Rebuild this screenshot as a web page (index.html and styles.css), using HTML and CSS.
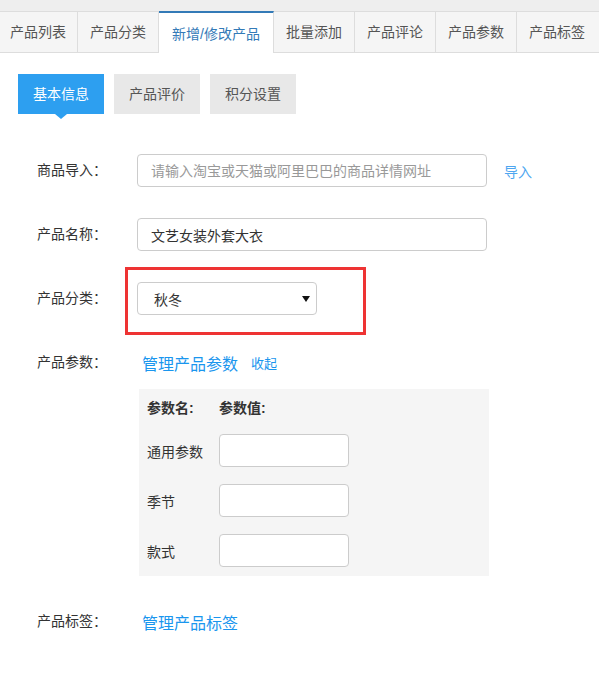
FILE: index.html
```html
<!DOCTYPE html>
<html lang="zh-CN">
<head>
    <meta charset="UTF-8" />
    <title>新增/修改产品</title>
    <link rel="stylesheet" href="styles.css">
</head>
<body>
    <div class="top-strip"></div>

    <!-- 主导航 -->
    <ul class="nav-tabs">
        <li class="first">产品列表</li>
        <li>产品分类</li>
        <li class="active">新增/修改产品</li>
        <li>批量添加</li>
        <li>产品评论</li>
        <li>产品参数</li>
        <li class="last">产品标签</li>
    </ul>

    <div class="content">
        <!-- 子导航 -->
        <div class="sub-tabs">
            <span class="sub-tab on">基本信息</span>
            <span class="sub-tab">产品评价</span>
            <span class="sub-tab">积分设置</span>
        </div>

        <form class="goods-form">
            <div class="form-row">
                <label class="form-label">商品导入：</label>
                <input type="text" class="form-input" placeholder="请输入淘宝或天猫或阿里巴巴的商品详情网址" />
                <a class="link-import">导入</a>
            </div>
            <div class="form-row">
                <label class="form-label">产品名称：</label>
                <input type="text" class="form-input" value="文艺女装外套大衣" />
            </div>
            <div class="form-row">
                <label class="form-label">产品分类：</label>
                <div class="select-wrap">
                    <div class="select-box">
                        <span>秋冬</span>
                        <i class="caret"></i>
                    </div>
                </div>
            </div>
            <div class="form-row top">
                <label class="form-label">产品参数：</label>
                <div class="param-col">
                    <div class="link-line">
                        <a class="link-big">管理产品参数</a>
                        <a class="link-small">收起</a>
                    </div>
                    <div class="param-box">
                        <div class="param-head">
                            <span class="param-name">参数名:</span>
                            <span>参数值:</span>
                        </div>
                        <div class="param-row">
                            <span class="param-name">通用参数</span>
                            <input type="text" class="param-input" />
                        </div>
                        <div class="param-row">
                            <span class="param-name">季节</span>
                            <input type="text" class="param-input" />
                        </div>
                        <div class="param-row">
                            <span class="param-name">款式</span>
                            <input type="text" class="param-input" />
                        </div>
                    </div>
                </div>
            </div>
            <div class="form-row">
                <label class="form-label">产品标签：</label>
                <div class="link-line">
                    <a class="link-big">管理产品标签</a>
                </div>
            </div>
        </form>
    </div>
</body>
</html>
```

FILE: styles.css
```css
* {
    box-sizing:border-box;
}
body {
    margin:0;
    font-family:"Liberation Sans", "Noto Sans CJK SC", sans-serif;
    font-size:14px;
    color:#333;
    background:#fff;
}
.top-strip {
    height:11px;
    background:#eee;
}
.nav-tabs {
    display:flex;
    margin:0;
    padding:0;
    list-style:none;
    background:#f5f5f5;
    border-top:1px solid #ddd;
    border-bottom:1px solid #ddd;
}
.nav-tabs li {
    height:40px;
    line-height:40px;
    padding:0 12px;
    color:#555;
    border-right:1px solid #ddd;
    white-space:nowrap;
}
.nav-tabs li.first {
    padding:0 11px 0 10px;
}
.nav-tabs li.last {
    flex:1;
    border-right:none;
}
.nav-tabs li.active {
    margin:-1px 0 -1px;
    height:42px;
    line-height:42px;
    padding:0 13px;
    background:#fff;
    color:#337ab7;
    border-top:2px solid #337ab7;
}
.content {
    padding:21px 18px 0;
}
.sub-tabs {
    display:flex;
    gap:10px;
}
.sub-tab {
    position:relative;
    width:86px;
    height:40px;
    line-height:40px;
    text-align:center;
    background:#e8e8e8;
    color:#555;
}
.sub-tab.on {
    background:#2d9ff0;
    color:#fff;
}
.sub-tab.on:after {
    content:'';
    position:absolute;
    left:50%;
    bottom:-5px;
    margin-left:-6px;
    border-left:6px solid transparent;
    border-right:6px solid transparent;
    border-top:5px solid #2d9ff0;
}
.goods-form {
    margin-top:40px;
}
.form-row {
    display:flex;
    align-items:center;
    min-height:33px;
    margin-bottom:31px;
}
.form-row.top {
    align-items:flex-start;
    margin-bottom:29px;
}
.form-label {
    width:119px;
    padding-left:19px;
    line-height:33px;
    color:#333;
}
.form-input {
    width:350px;
    height:33px;
    padding:0 13px;
    border:1px solid #ccc;
    border-radius:4px;
    font-family:inherit;
    font-size:14px;
    color:#333;
    outline:none;
}
.form-input::placeholder {
    color:#999;
}
.link-import {
    margin-left:17px;
    color:#4ea6f0;
}
.select-wrap {
    position:relative;
}
.select-wrap:before {
    content:'';
    position:absolute;
    top:-15px;
    left:-12px;
    right:-49px;
    bottom:-20px;
    border:3px solid #ee3333;
}
.select-box {
    display:flex;
    align-items:center;
    justify-content:space-between;
    width:180px;
    height:33px;
    padding:0 6px 0 16px;
    border:1px solid #ccc;
    border-radius:4px;
    color:#333;
}
.caret {
    width:0;
    height:0;
    margin-top:1px;
    border-left:4px solid transparent;
    border-right:4px solid transparent;
    border-top:6px solid #111;
}
.param-col {
    display:flex;
    flex-direction:column;
}
.link-line {
    height:33px;
    display:flex;
    align-items:center;
    padding-left:5px;
}
.link-big {
    font-size:16px;
    color:#1a96ee;
}
.link-small {
    margin-left:13px;
    font-size:13px;
    color:#1a96ee;
}
.param-box {
    width:350px;
    margin:10px 0 0 2px;
    padding:9px 8px;
    background:#f5f5f5;
}
.param-head {
    display:flex;
    height:20px;
    line-height:20px;
    margin-bottom:16px;
    font-weight:bold;
}
.param-row {
    display:flex;
    align-items:center;
    margin-bottom:17px;
}
.param-row:last-child {
    margin-bottom:0;
}
.param-name {
    width:72px;
}
.param-input {
    width:130px;
    height:33px;
    border:1px solid #ccc;
    border-radius:4px;
    background:#fff;
    outline:none;
}
```
